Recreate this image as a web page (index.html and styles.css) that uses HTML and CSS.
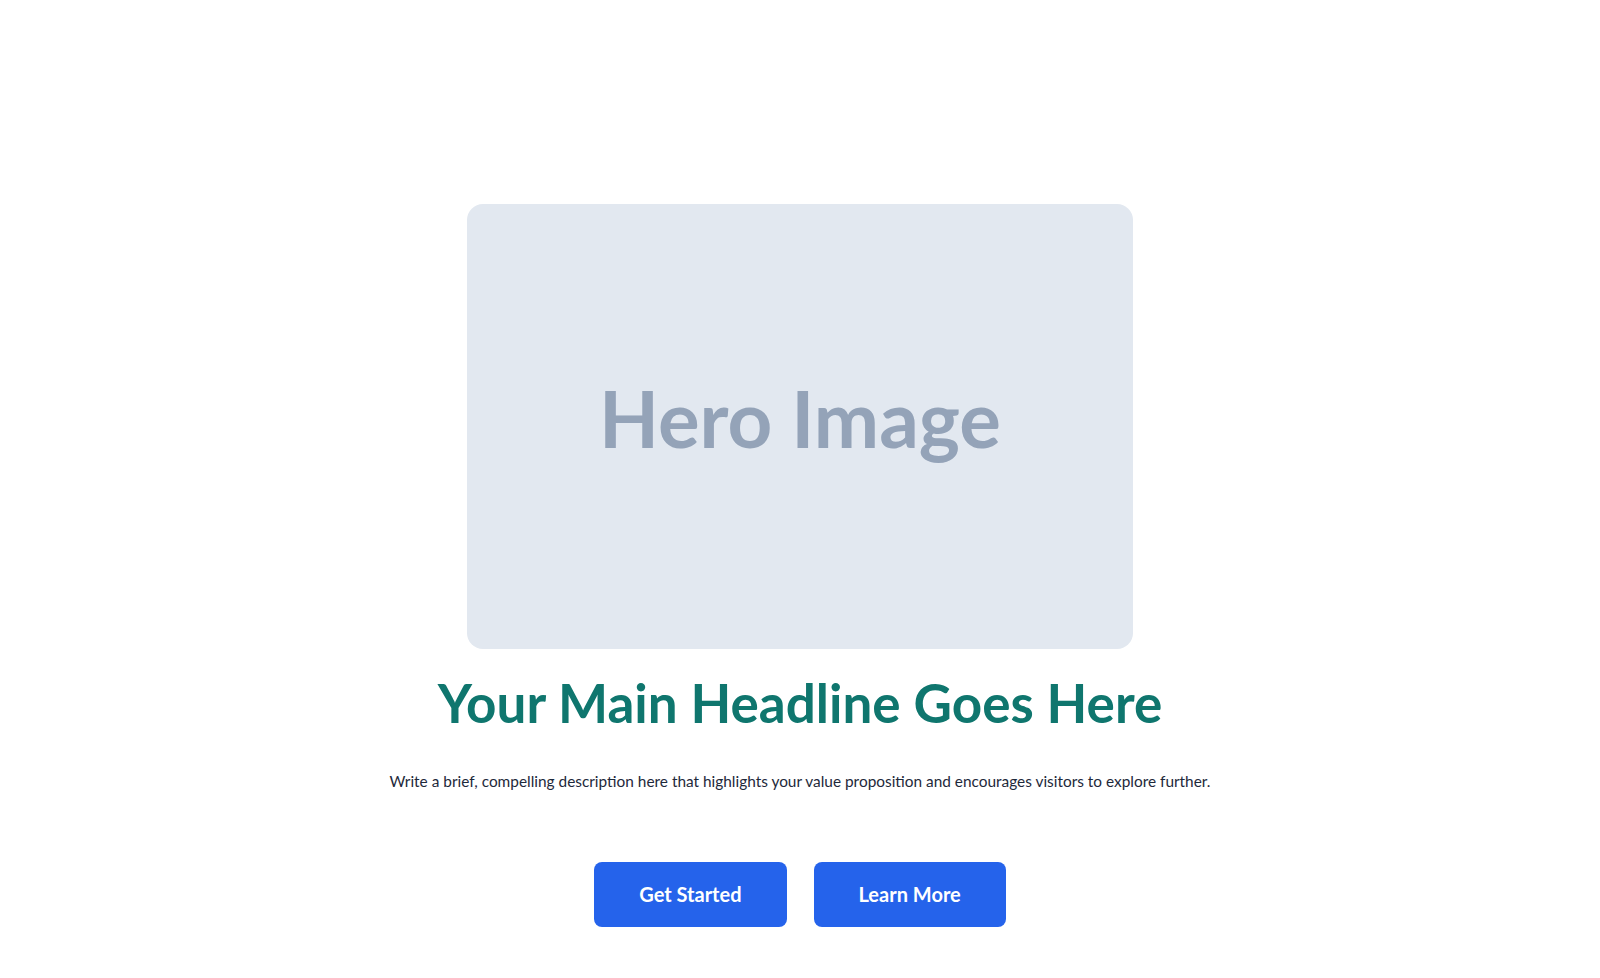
FILE: index.html
```html
<!DOCTYPE html>
<html lang="en">
<head>
  <meta charset="UTF-8">
  <title>Hero</title>
  <link rel="stylesheet" href="styles.css">
</head>
<body>
  <main class="hero">
    <div class="hero-image">
      <span>Hero Image</span>
    </div>

    <h1 class="headline">Your Main Headline Goes Here</h1>

    <p class="lead">Write a brief, compelling description here that highlights your value proposition and encourages visitors to explore further.</p>

    <div class="actions">
      <a href="#" class="btn">Get Started</a>
      <a href="#" class="btn">Learn More</a>
    </div>
  </main>
</body>
</html>
```

FILE: styles.css
```css
body {
  margin: 0;
  font-family: Lato, "Noto Sans", sans-serif;
  background-color: #fff;
  color: #1e293b;
}
.hero {
  display: flex;
  flex-direction: column;
  align-items: center;
  padding-top: 204px;
}
.hero-image {
  width: 666px;
  height: 445px;
  background-color: #e2e8f0;
  border-radius: 16px;
  display: flex;
  align-items: center;
  justify-content: center;
}
.hero-image span {
  font-family: Lato, sans-serif;
  font-size: 78px;
  font-weight: 700;
  color: #94a3b8;
  margin-top: -18px;
}
.headline {
  margin: 22px 0 0;
  font-size: 53px;
  font-weight: 700;
  line-height: 1.2;
  color: #0f766e;
}
.lead {
  margin: 34px 0 0;
  font-size: 15.4px;
  line-height: 24px;
}
.actions {
  display: flex;
  gap: 27px;
  margin-top: 69px;
}
.btn {
  display: inline-flex;
  align-items: center;
  justify-content: center;
  height: 65px;
  padding: 0 45px;
  background-color: #2563eb;
  color: #fff;
  font-size: 20px;
  font-weight: 700;
  text-decoration: none;
  border-radius: 8px;
}
```
